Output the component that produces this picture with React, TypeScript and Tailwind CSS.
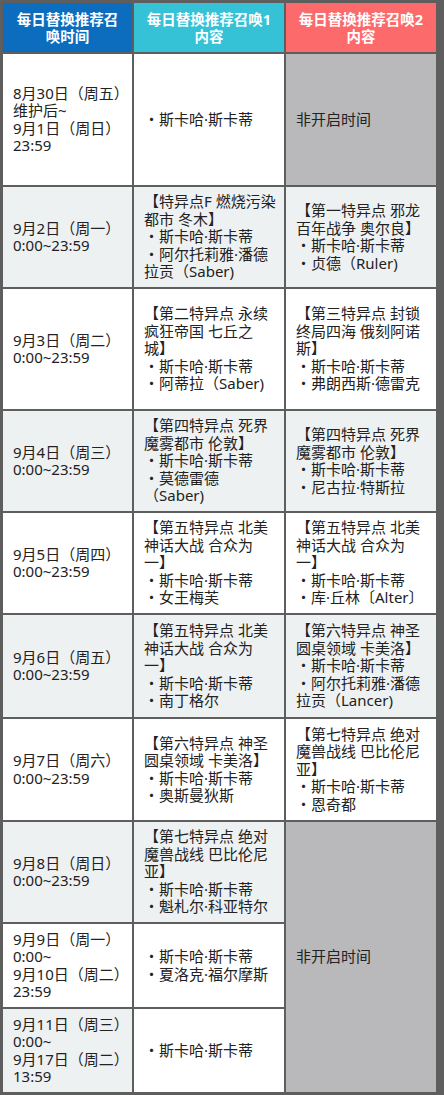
const font = { fontFamily: '"Noto Sans", "Noto Sans CJK SC", sans-serif' }

type Row = {
  time: string[]
  c1: string[]
  c2?: string[]
  bg1: string
  bg2: string
  bg3?: string
}

const rows: Row[] = [
  {
    time: ["8月30日（周五）", "维护后~", "9月1日（周日）", "23:59"],
    c1: ["・斯卡哈·斯卡蒂"],
    c2: ["非开启时间"],
    bg1: "bg-white",
    bg2: "bg-white",
    bg3: "bg-[#b9b9bb]",
  },
  {
    time: ["9月2日（周一）", "0:00~23:59"],
    c1: ["【特异点F 燃烧污染", "都市 冬木】", "・斯卡哈·斯卡蒂", "・阿尔托莉雅·潘德", "拉贡（Saber)"],
    c2: ["【第一特异点 邪龙", "百年战争 奥尔良】", "・斯卡哈·斯卡蒂", "・贞德（Ruler)"],
    bg1: "bg-[#eef1f2]",
    bg2: "bg-[#eef1f2]",
    bg3: "bg-[#eef1f2]",
  },
  {
    time: ["9月3日（周二）", "0:00~23:59"],
    c1: ["【第二特异点 永续", "疯狂帝国 七丘之", "城】", "・斯卡哈·斯卡蒂", "・阿蒂拉（Saber)"],
    c2: ["【第三特异点 封锁", "终局四海 俄刻阿诺", "斯】", "・斯卡哈·斯卡蒂", "・弗朗西斯·德雷克"],
    bg1: "bg-white",
    bg2: "bg-white",
    bg3: "bg-white",
  },
  {
    time: ["9月4日（周三）", "0:00~23:59"],
    c1: ["【第四特异点 死界", "魔雾都市 伦敦】", "・斯卡哈·斯卡蒂", "・莫德雷德", "（Saber)"],
    c2: ["【第四特异点 死界", "魔雾都市 伦敦】", "・斯卡哈·斯卡蒂", "・尼古拉·特斯拉"],
    bg1: "bg-[#eef1f2]",
    bg2: "bg-[#eef1f2]",
    bg3: "bg-[#eef1f2]",
  },
  {
    time: ["9月5日（周四）", "0:00~23:59"],
    c1: ["【第五特异点 北美", "神话大战 合众为", "一】", "・斯卡哈·斯卡蒂", "・女王梅芙"],
    c2: ["【第五特异点 北美", "神话大战 合众为", "一】", "・斯卡哈·斯卡蒂", "・库·丘林〔Alter〕"],
    bg1: "bg-white",
    bg2: "bg-white",
    bg3: "bg-white",
  },
  {
    time: ["9月6日（周五）", "0:00~23:59"],
    c1: ["【第五特异点 北美", "神话大战 合众为", "一】", "・斯卡哈·斯卡蒂", "・南丁格尔"],
    c2: ["【第六特异点 神圣", "圆桌领域 卡美洛】", "・斯卡哈·斯卡蒂", "・阿尔托莉雅·潘德", "拉贡（Lancer)"],
    bg1: "bg-[#eef1f2]",
    bg2: "bg-[#eef1f2]",
    bg3: "bg-[#eef1f2]",
  },
  {
    time: ["9月7日（周六）", "0:00~23:59"],
    c1: ["【第六特异点 神圣", "圆桌领域 卡美洛】", "・斯卡哈·斯卡蒂", "・奥斯曼狄斯"],
    c2: ["【第七特异点 绝对", "魔兽战线 巴比伦尼", "亚】", "・斯卡哈·斯卡蒂", "・恩奇都"],
    bg1: "bg-white",
    bg2: "bg-white",
    bg3: "bg-white",
  },
  {
    time: ["9月8日（周日）", "0:00~23:59"],
    c1: ["【第七特异点 绝对", "魔兽战线 巴比伦尼", "亚】", "・斯卡哈·斯卡蒂", "・魁札尔·科亚特尔"],
    bg1: "bg-[#eef1f2]",
    bg2: "bg-[#eef1f2]",
  },
  {
    time: ["9月9日（周一）", "0:00~", "9月10日（周二）", "23:59"],
    c1: ["・斯卡哈·斯卡蒂", "・夏洛克·福尔摩斯"],
    bg1: "bg-white",
    bg2: "bg-white",
  },
  {
    time: ["9月11日（周三）", "0:00~", "9月17日（周二）", "13:59"],
    c1: ["・斯卡哈·斯卡蒂"],
    bg1: "bg-[#eef1f2]",
    bg2: "bg-white",
  },
]

function Cell({ lines, className }: { lines: string[]; className: string }) {
  return (
    <div className={`flex flex-col justify-center px-[10px] text-[15px] leading-[17.5px] text-[#222] ${className}`}>
      {lines.map((l, i) => (
        <div key={i} className="whitespace-nowrap">
          {l}
        </div>
      ))}
    </div>
  )
}

export default function App() {
  return (
    <div className="w-[444px] h-[1095px] bg-[#5e5e5e] pl-[3px] pt-[3px]" style={font}>
      <div className="grid grid-cols-[129px_150px_150px] grid-rows-[49px_131px_100px_120px_100px_100px_102px_101px_100px_83px_83px] gap-[2px]">
        <div className="flex flex-col items-center justify-center bg-[#0c6dbf] text-[14.5px] font-bold leading-[16.5px] text-white">
          <div>每日替换推荐召</div>
          <div>唤时间</div>
        </div>
        <div className="flex flex-col items-center justify-center bg-[#35c2d7] text-[14.5px] font-bold leading-[16.5px] text-white">
          <div>每日替换推荐召唤1</div>
          <div>内容</div>
        </div>
        <div className="flex flex-col items-center justify-center bg-[#fd6a6b] text-[14.5px] font-bold leading-[16.5px] text-white">
          <div>每日替换推荐召唤2</div>
          <div>内容</div>
        </div>

        {rows.map((r, i) => (
          <div key={i} className="contents">
            <Cell lines={r.time} className={r.bg1} />
            <Cell lines={r.c1} className={r.bg2} />
            {r.c2 && <Cell lines={r.c2} className={r.bg3 ?? "bg-white"} />}
            {i === 7 && <Cell lines={["非开启时间"]} className="row-span-3 bg-[#b9b9bb]" />}
          </div>
        ))}
      </div>
    </div>
  )
}
